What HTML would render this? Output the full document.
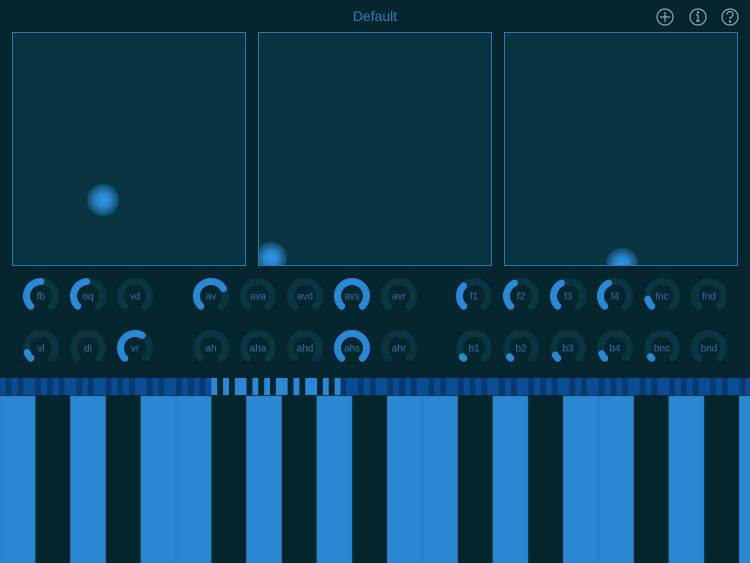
<!DOCTYPE html>
<html><head><meta charset="utf-8"><style>
html,body{margin:0;padding:0;background:#06262f;width:750px;height:563px;overflow:hidden;font-family:"Liberation Sans",sans-serif}
.t{position:absolute;left:0;width:750px;top:8px;text-align:center;color:#2a7fc0;font-size:14px}
.pad{position:absolute;top:32px;width:232px;height:232px;border:1px solid #2d78ac;background:#093441;overflow:hidden}
.dot{position:absolute;width:32px;height:32px;border-radius:50%;background:radial-gradient(circle,#2f95e0 0%,#2a85cc 30%,rgba(42,130,200,0.4) 62%,rgba(42,130,200,0) 100%)}
#svg{position:absolute;left:0;top:0}
</style></head><body>
<div class="t">Default</div>
<svg width="750" height="40" style="position:absolute;left:0;top:0" fill="none" stroke="#8fa8b4" stroke-width="1.2">
<circle cx="665" cy="17" r="8"/><path d="M665 12v10M660 17h10"/>
<circle cx="698" cy="17" r="8"/><path d="M698 15v6M696 21h4M696 15h2"/><circle cx="698" cy="12.5" r="0.6" fill="#8fa8b4"/>
<circle cx="730" cy="17" r="8"/><path d="M727 14.5a3 3 0 1 1 3 3v1.5"/><circle cx="730" cy="21.5" r="0.6" fill="#8fa8b4"/>
</svg>
<div class="pad" style="left:12px"><div class="dot" style="left:74px;top:151px"></div></div>
<div class="pad" style="left:258px"><div class="dot" style="left:-4px;top:209px"></div></div>
<div class="pad" style="left:504px"><div class="dot" style="left:101px;top:215px"></div></div>
<svg id="svg" width="750" height="563"></svg>
<script>
var s='';
var xs=[41,88,135,211,258,305,352,399,474,521,568,615,662,709];
var r1=['fb','oq','vd','av','ava','avd','avs','avr','f1','f2','f3','f4','fnc','fnd'];
var v1=[0.5,0.48,0,0.72,0,0,1,0,0.33,0.4,0.4,0.4,0.12,0];
var r2=['vl','di','vr','ah','aha','ahd','ahs','ahr','b1','b2','b3','b4','bnc','bnd'];
var v2=[0.1,0,0.61,0,0,0,1,0,0.03,0.03,0.06,0.08,0.03,0];
function pt(cx,cy,r,a){a=a*Math.PI/180;return (cx+r*Math.sin(a)).toFixed(2)+' '+(cy-r*Math.cos(a)).toFixed(2);}
function arc(cx,cy,r,a0,a1){var l=(a1-a0)>180?1:0;return 'M'+pt(cx,cy,r,a0)+' A'+r+' '+r+' 0 '+l+' 1 '+pt(cx,cy,r,a1);}
function knob(cx,cy,lab,v){
 s+='<path d="'+arc(cx,cy,14.5,-135,135)+'" stroke="#0b3541" stroke-width="7" fill="none" stroke-linecap="round"/>';
 if(v>0)s+='<path d="'+arc(cx,cy,14.5,-135,-135+Math.max(v*270,2))+'" stroke="#2a88d4" stroke-width="7" fill="none" stroke-linecap="round"/>';
 s+='<text x="'+cx+'" y="'+(cy+3.5)+'" text-anchor="middle" font-size="10" fill="#2a70aa" font-family="Liberation Sans, sans-serif">'+lab+'</text>';
}
for(var i=0;i<14;i++){knob(xs[i],296,r1[i],v1[i]);knob(xs[i],348,r2[i],v2[i]);}
var blk={1:1,3:1,6:1,8:1,10:1};
var w=5.87;
for(var k=0;k*w<750;k++){var x=k*w,n=k%12,b=blk[n];var hl=(x>=208&&x<340);
 var c=hl?(b?'#06262f':'#2a88d4'):(b?'#073a70':'#0a4d94');
 s+='<rect x="'+x.toFixed(2)+'" y="378" width="'+(w+0.3).toFixed(2)+'" height="17" fill="'+c+'"/>';}
var W=35.2;
for(var k=0;k*W<750;k++){var n=k%12;if(!blk[n]){s+='<rect x="'+(k*W).toFixed(2)+'" y="396" width="'+W+'" height="167" fill="#2a88d4" stroke="#2a6d9f" stroke-width="0.6"/>';}}
document.getElementById('svg').innerHTML=s;
</script>
</body></html>
